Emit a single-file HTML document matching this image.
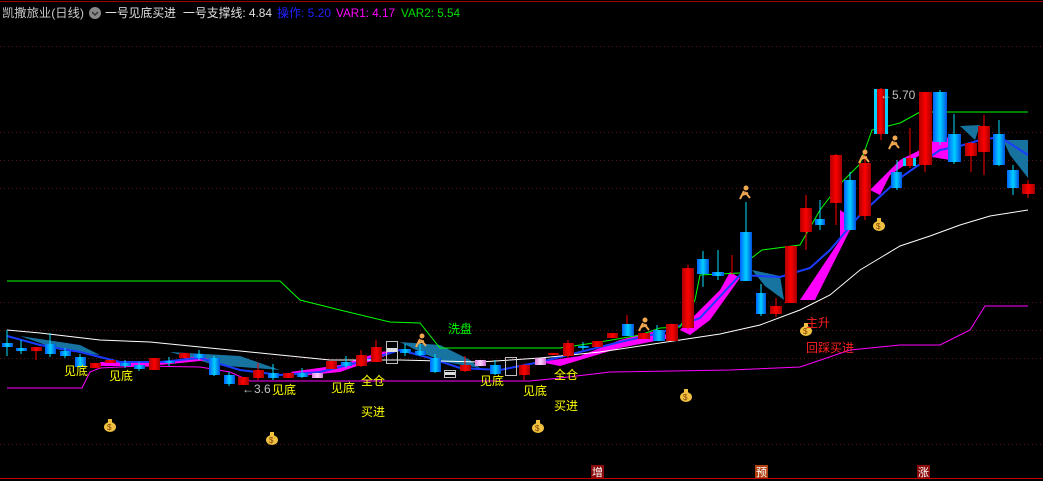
<!DOCTYPE html>
<html><head><meta charset="utf-8"><style>
html,body{margin:0;padding:0;background:#000;width:1043px;height:481px;overflow:hidden}
svg{display:block}
text{font-family:"Liberation Sans","Noto Sans CJK SC",sans-serif}
</style></head><body>
<svg width="1043" height="481" viewBox="0 0 1043 481" xmlns="http://www.w3.org/2000/svg">
<defs>
<linearGradient id="b" x1="0" x2="1"><stop offset="0" stop-color="#0060ff"/><stop offset="0.5" stop-color="#00d0ff"/><stop offset="1" stop-color="#0050e0"/></linearGradient>
<linearGradient id="r" x1="0" x2="1"><stop offset="0" stop-color="#b00000"/><stop offset="0.5" stop-color="#ff0000"/><stop offset="1" stop-color="#a00000"/></linearGradient>
<linearGradient id="p" x1="0" x2="1"><stop offset="0" stop-color="#e080e0"/><stop offset="0.5" stop-color="#ffd0ff"/><stop offset="1" stop-color="#d070d0"/></linearGradient>
<pattern id="dot" width="4" height="2" patternUnits="userSpaceOnUse"><rect width="1" height="1" fill="#5a1414"/></pattern>
</defs>
<rect width="1043" height="481" fill="#000"/>
<line x1="0" y1="1.5" x2="1043" y2="1.5" stroke="#a00000"/>
<line x1="0" y1="478.5" x2="1043" y2="478.5" stroke="#c00000"/>
<g fill="url(#dot)">
<rect x="0" y="46" width="1043" height="1"/><rect x="0" y="75" width="1043" height="1"/><rect x="0" y="103" width="1043" height="1"/><rect x="0" y="132" width="1043" height="1"/><rect x="0" y="160" width="1043" height="1"/><rect x="0" y="188" width="1043" height="1"/><rect x="0" y="217" width="1043" height="1"/><rect x="0" y="245" width="1043" height="1"/><rect x="0" y="273" width="1043" height="1"/><rect x="0" y="302" width="1043" height="1"/><rect x="0" y="330" width="1043" height="1"/><rect x="0" y="358" width="1043" height="1"/><rect x="0" y="387" width="1043" height="1"/><rect x="0" y="415" width="1043" height="1"/><rect x="0" y="444" width="1043" height="1"/>
</g>
<!-- header -->
<g font-size="12">
<text x="2" y="17" fill="#c8c8c8" textLength="82" lengthAdjust="spacingAndGlyphs">凯撒旅业(日线)</text>
<circle cx="95" cy="13" r="6" fill="#888"/><path d="M92 12l3 3 3-3" stroke="#333" stroke-width="1.5" fill="none"/>
<text x="105" y="17" fill="#e0e0e0" textLength="71" lengthAdjust="spacingAndGlyphs">一号见底买进</text>
<text x="183" y="17" fill="#e0e0e0" textLength="89" lengthAdjust="spacingAndGlyphs">一号支撑线: 4.84</text>
<text x="277" y="17" fill="#2020ff" textLength="54" lengthAdjust="spacingAndGlyphs">操作: 5.20</text>
<text x="336" y="17" fill="#ff00ff" textLength="59" lengthAdjust="spacingAndGlyphs">VAR1: 4.17</text>
<text x="401" y="17" fill="#00e000" textLength="59" lengthAdjust="spacingAndGlyphs">VAR2: 5.54</text>
</g>

<!-- bands -->
<g fill="#1a80b0" opacity="0.9">
<polygon points="20,336 80,345 100,355 60,350"/>
<polygon points="170,352 240,356 280,370 215,365"/>
<polygon points="400,342 440,345 470,360 480,368 445,362 420,352"/>
<polygon points="752,270 780,276 784,300 765,286"/>
<polygon points="960,126 980,125 975,140"/>
<polygon points="1003,140 1028,140 1028,178 1010,155"/>
</g>
<g fill="#ff00ff">
<polygon points="100,362 160,362 200,356 210,360 150,366 100,366"/>
<polygon points="290,372 340,365 380,352 400,350 380,358 340,372 300,376"/>
<polygon points="540,362 580,356 620,340 660,330 670,338 620,348 560,366"/>
<polygon points="680,330 720,290 730,272 740,278 710,320 690,335"/>
<polygon points="800,300 840,240 840,210 855,220 830,270 815,300"/>
<polygon points="870,190 900,160 930,145 940,130 960,150 950,160 920,155 890,175 880,195"/>
</g>
<polyline fill="none" stroke="#1a3cff" stroke-width="2" points="7,336 40,345 80,352 120,362 160,362 200,358 240,370 280,375 320,372 360,362 400,350 430,358 460,368 500,370 540,362 580,352 620,342 660,333 700,318 740,275 780,277 810,268 830,250 860,215 900,178 940,150 960,146 980,140 1000,137 1028,155"/>
<polyline fill="none" stroke="#ffffff" stroke-width="1" points="7,330 40,333 100,340 150,342 200,347 250,352 300,357 330,360 400,360 480,362 540,358 600,352 640,346 680,340 720,334 760,325 800,310 830,295 860,270 880,258 900,246 930,236 960,225 990,216 1028,210"/>
<polyline fill="none" stroke="#00ff00" stroke-width="1" points="7,281 280,281 300,300 340,310 390,322 420,323 440,348 560,348 600,342 640,335 660,328 680,327 695,300 700,275 740,273 745,263 762,250 800,245 820,210 840,184 860,164 872,130 900,123 920,112 1028,112"/>
<polyline fill="none" stroke="#ff00ff" stroke-width="1" points="7,388 82,388 90,372 100,368 140,366 200,367 230,372 250,381 530,381 560,378 610,372 730,370 800,367 850,350 900,345 940,345 970,330 985,306 1028,306"/>

<!-- candles -->
<g>
<g stroke="#00e0ff" stroke-width="1">
<line x1="7" y1="330" x2="7" y2="356"/><line x1="21" y1="340" x2="21" y2="354"/><line x1="50" y1="333" x2="50" y2="357"/><line x1="65" y1="348" x2="65" y2="358"/><line x1="80" y1="354" x2="80" y2="368"/><line x1="125" y1="360" x2="125" y2="368"/><line x1="139" y1="362" x2="139" y2="371"/><line x1="169" y1="357" x2="169" y2="366"/><line x1="199" y1="350" x2="199" y2="360"/><line x1="214" y1="356" x2="214" y2="376"/><line x1="229" y1="372" x2="229" y2="386"/><line x1="273" y1="364" x2="273" y2="380"/><line x1="302" y1="368" x2="302" y2="378"/><line x1="346" y1="356" x2="346" y2="368"/><line x1="405" y1="344" x2="405" y2="356"/><line x1="420" y1="344" x2="420" y2="356"/><line x1="435" y1="354" x2="435" y2="373"/><line x1="495" y1="360" x2="495" y2="375"/><line x1="583" y1="342" x2="583" y2="350"/><line x1="627" y1="320" x2="627" y2="335"/><line x1="657" y1="325" x2="657" y2="341"/><line x1="703" y1="251" x2="703" y2="287"/><line x1="718" y1="250" x2="718" y2="280"/><line x1="746" y1="202" x2="746" y2="281"/><line x1="761" y1="284" x2="761" y2="316"/><line x1="820" y1="200" x2="820" y2="230"/><line x1="850" y1="172" x2="850" y2="230"/><line x1="897" y1="160" x2="897" y2="190"/><line x1="940" y1="90" x2="940" y2="145"/><line x1="954" y1="114" x2="954" y2="164"/><line x1="999" y1="120" x2="999" y2="166"/><line x1="1013" y1="165" x2="1013" y2="195"/>
</g>
<g stroke="#ff0000" stroke-width="1">
<line x1="36" y1="347" x2="36" y2="360"/><line x1="258" y1="363" x2="258" y2="380"/><line x1="361" y1="350" x2="361" y2="367"/><line x1="376" y1="340" x2="376" y2="362"/><line x1="465" y1="356" x2="465" y2="372"/><line x1="524" y1="364" x2="524" y2="380"/><line x1="568" y1="340" x2="568" y2="358"/><line x1="627" y1="315" x2="627" y2="324"/><line x1="688" y1="265" x2="688" y2="330"/><line x1="732" y1="255" x2="732" y2="275"/><line x1="776" y1="298" x2="776" y2="317"/><line x1="806" y1="195" x2="806" y2="250"/><line x1="836" y1="154" x2="836" y2="225"/><line x1="865" y1="150" x2="865" y2="220"/><line x1="881" y1="88" x2="881" y2="140"/><line x1="910" y1="128" x2="910" y2="168"/><line x1="925" y1="92" x2="925" y2="172"/><line x1="971" y1="142" x2="971" y2="172"/><line x1="984" y1="115" x2="984" y2="175"/><line x1="1028" y1="180" x2="1028" y2="198"/>
</g>
<g fill="url(#b)">
<rect x="2" y="343" width="11" height="4"/><rect x="16" y="348" width="11" height="3"/><rect x="45" y="344" width="11" height="10"/><rect x="60" y="351" width="11" height="5"/><rect x="75" y="357" width="11" height="10"/><rect x="120" y="363" width="11" height="3"/><rect x="134" y="365" width="11" height="4"/><rect x="164" y="361" width="11" height="2"/><rect x="194" y="354" width="11" height="4"/><rect x="209" y="358" width="11" height="17"/><rect x="224" y="375" width="11" height="9"/><rect x="268" y="373" width="11" height="5"/><rect x="297" y="373" width="11" height="4"/><rect x="341" y="362" width="11" height="4"/><rect x="400" y="349" width="11" height="4"/><rect x="415" y="351" width="11" height="4"/><rect x="430" y="358" width="11" height="14"/><rect x="490" y="365" width="11" height="9"/><rect x="578" y="346" width="11" height="2"/><rect x="622" y="324" width="12" height="12"/><rect x="653" y="330" width="12" height="11"/><rect x="697" y="259" width="12" height="15"/><rect x="712" y="272" width="12" height="4"/><rect x="740" y="232" width="12" height="49"/><rect x="756" y="293" width="10" height="21"/><rect x="815" y="219" width="10" height="6"/><rect x="844" y="180" width="12" height="50"/><rect x="891" y="172" width="11" height="16"/><rect x="933" y="92" width="14" height="50"/><rect x="948" y="134" width="13" height="28"/><rect x="993" y="134" width="12" height="31"/><rect x="1007" y="170" width="12" height="18"/>
</g>
<g fill="url(#r)">
<rect x="31" y="347" width="11" height="4"/><rect x="90" y="363" width="11" height="5"/><rect x="105" y="360" width="11" height="3"/><rect x="149" y="358" width="11" height="12"/><rect x="179" y="353" width="11" height="5"/><rect x="238" y="377" width="11" height="8"/><rect x="253" y="370" width="11" height="8"/><rect x="283" y="373" width="11" height="5"/><rect x="326" y="361" width="11" height="8"/><rect x="356" y="355" width="11" height="11"/><rect x="371" y="347" width="11" height="15"/><rect x="460" y="365" width="11" height="6"/><rect x="519" y="365" width="11" height="10"/><rect x="548" y="353" width="11" height="2"/><rect x="563" y="343" width="11" height="13"/><rect x="592" y="341" width="11" height="6"/><rect x="607" y="333" width="11" height="5"/><rect x="638" y="333" width="12" height="6"/><rect x="666" y="324" width="12" height="17"/><rect x="682" y="268" width="12" height="60"/><rect x="770" y="306" width="12" height="8"/><rect x="785" y="246" width="12" height="57"/><rect x="800" y="208" width="12" height="24"/><rect x="830" y="155" width="12" height="48"/><rect x="859" y="163" width="12" height="53"/><rect x="876" y="89" width="9" height="45"/><rect x="906" y="158" width="8" height="8"/><rect x="919" y="92" width="13" height="73"/><rect x="965" y="143" width="12" height="13"/><rect x="978" y="126" width="12" height="26"/><rect x="1022" y="184" width="13" height="10"/>
</g>
<rect x="874" y="89" width="3" height="45" fill="#00d0ff"/><rect x="885" y="89" width="3" height="45" fill="#00d0ff"/>
<rect x="903" y="158" width="3" height="8" fill="#00d0ff"/><rect x="913" y="158" width="3" height="8" fill="#00d0ff"/>
<g fill="url(#p)"><rect x="312" y="373" width="11" height="5"/><rect x="475" y="360" width="11" height="6"/><rect x="535" y="358" width="11" height="7"/></g>
<g fill="none" stroke="#c0c0c0" stroke-width="1"><rect x="386.5" y="341.5" width="11" height="22"/><rect x="505.5" y="357.5" width="11" height="18"/><rect x="444.5" y="370.5" width="11" height="7"/></g>
<rect x="387" y="348" width="10" height="4" fill="#ddd"/><rect x="445" y="372" width="10" height="3" fill="#ddd"/>
</g>

<!-- runners -->
<g fill="#f0a850" stroke="#f0a850" stroke-width="2">
<circle cx="422" cy="336" r="2.5" stroke="none"/><path d="M420 339l-4 8M421 340l5 6M418 343l6-2" fill="none"/>
<circle cx="645" cy="320" r="2.5" stroke="none"/><path d="M643 323l-4 8M644 324l5 6M641 327l6-2" fill="none"/>
<circle cx="746" cy="188" r="2.5" stroke="none"/><path d="M744 191l-4 8M745 192l5 6M742 195l6-2" fill="none"/>
<circle cx="865" cy="152" r="2.5" stroke="none"/><path d="M863 155l-4 8M864 156l5 6M861 159l6-2" fill="none"/>
<circle cx="895" cy="138" r="2.5" stroke="none"/><path d="M893 141l-4 8M894 142l5 6M891 145l6-2" fill="none"/>
</g>
<!-- money bags -->
<g>
<g transform="translate(110,425)"><ellipse cx="0" cy="2" rx="6" ry="5" fill="#f0c040"/><rect x="-2" y="-6" width="4" height="4" fill="#f0c040"/><text x="-3" y="5" font-size="8" fill="#804000">$</text></g>
<g transform="translate(272,438)"><ellipse cx="0" cy="2" rx="6" ry="5" fill="#f0c040"/><rect x="-2" y="-6" width="4" height="4" fill="#f0c040"/><text x="-3" y="5" font-size="8" fill="#804000">$</text></g>
<g transform="translate(538,426)"><ellipse cx="0" cy="2" rx="6" ry="5" fill="#f0c040"/><rect x="-2" y="-6" width="4" height="4" fill="#f0c040"/><text x="-3" y="5" font-size="8" fill="#804000">$</text></g>
<g transform="translate(686,395)"><ellipse cx="0" cy="2" rx="6" ry="5" fill="#f0c040"/><rect x="-2" y="-6" width="4" height="4" fill="#f0c040"/><text x="-3" y="5" font-size="8" fill="#804000">$</text></g>
<g transform="translate(806,329)"><ellipse cx="0" cy="2" rx="6" ry="5" fill="#f0c040"/><rect x="-2" y="-6" width="4" height="4" fill="#f0c040"/><text x="-3" y="5" font-size="8" fill="#804000">$</text></g>
<g transform="translate(879,224)"><ellipse cx="0" cy="2" rx="6" ry="5" fill="#f0c040"/><rect x="-2" y="-6" width="4" height="4" fill="#f0c040"/><text x="-3" y="5" font-size="8" fill="#804000">$</text></g>
</g>
<!-- labels -->
<g font-size="12" fill="#ffff00">
<text x="64" y="375">见底</text><text x="109" y="380">见底</text><text x="272" y="394">见底</text><text x="331" y="392">见底</text><text x="480" y="385">见底</text><text x="523" y="395">见底</text>
<text x="361" y="385">全仓</text><text x="554" y="379">全仓</text>
<text x="361" y="416">买进</text><text x="554" y="410">买进</text>
</g>
<text x="448" y="333" font-size="12" fill="#00ff00">洗盘</text>
<text x="806" y="327" font-size="12" fill="#ff2020">主升</text>
<text x="806" y="352" font-size="12" fill="#ff2020">回踩买进</text>
<text x="242" y="393" font-size="12" fill="#c0c0c0">←3.6</text>
<text x="880" y="99" font-size="12" fill="#c0c0c0">←5.70</text>
<!-- bottom boxes -->
<rect x="591" y="465" width="13" height="13" fill="#8a0a0a"/><text x="592" y="476" font-size="11" fill="#fff">增</text>
<rect x="755" y="465" width="13" height="13" fill="#b04010"/><text x="756" y="476" font-size="11" fill="#fff">预</text>
<rect x="917" y="465" width="13" height="13" fill="#8a0a0a"/><text x="918" y="476" font-size="11" fill="#fff">涨</text>
</svg>
</body></html>
